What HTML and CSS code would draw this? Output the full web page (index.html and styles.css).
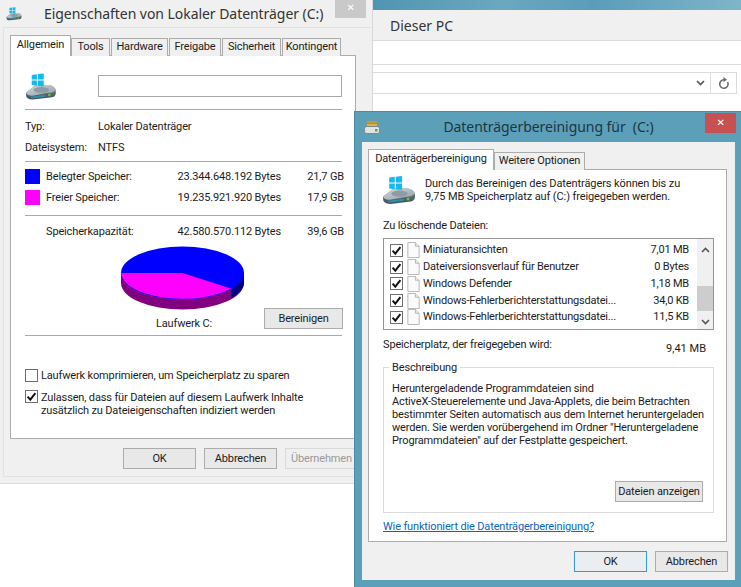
FILE: index.html
```html
<!DOCTYPE html>
<html lang="de">
<head>
<meta charset="utf-8">
<title>Datenträgerbereinigung</title>
<link rel="stylesheet" href="styles.css">
</head>
<body>
<svg class="defs" width="0" height="0" aria-hidden="true">
  <defs>
    <linearGradient id="diskFront" x1="0" y1="0" x2="0" y2="1">
      <stop offset="0" stop-color="#7d8c95"/>
      <stop offset="1" stop-color="#414d55"/>
    </linearGradient>
    <linearGradient id="diskTop" x1="0" y1="0" x2="1" y2="1">
      <stop offset="0" stop-color="#d3dadd"/>
      <stop offset="1" stop-color="#8f9da5"/>
    </linearGradient>
    <symbol id="drive" viewBox="0 0 33 28">
      <path d="M1 20 L11 12 H25 Q31 13 32 18 L32 21 Q31 25 26 25 L8 27 Q1 27 1 22 Z" fill="url(#diskFront)"/>
      <path d="M1 20 L11 12 H25 Q31 13 32 17 Q30 20 24 20 L8 23 Q2 23 1 20 Z" fill="url(#diskTop)"/>
      <ellipse cx="17" cy="17" rx="8" ry="3" fill="#8d9ba3"/>
      <path d="M5 24 L21 22 V24 L7 26 Z" fill="#2d8fae"/>
      <rect x="24" y="21" width="2.5" height="2.5" fill="#5fc24a"/>
      <path d="M7 1.5 L12.4 .7 V6.2 H7 Z M13.4 .6 L19.5 0 V6.2 H13.4 Z M7 7.2 H12.4 V12.8 L7 12 Z M13.4 7.2 H19.5 V13.6 L13.4 12.9 Z" fill="#14b9ef"/>
    </symbol>
    <symbol id="cleaner" viewBox="0 0 16 13">
      <path d="M3 0 H13 L14 2 H2 Z M3 3 H13 V5 H3 Z" fill="#c79a2b"/>
      <path d="M4 3 V5 M6 3 V5 M8 3 V5 M10 3 V5 M12 3 V5" stroke="#f1d98a" stroke-width=".8"/>
      <rect x="0.5" y="5.5" width="15" height="7" rx="2" fill="#dfe3e4" stroke="#7d878c"/>
      <rect x="11" y="8" width="2.5" height="2.5" fill="#4fae3b"/>
    </symbol>
    <symbol id="tick" viewBox="0 0 13 13">
      <path d="M2.6 6.6 L5.3 9.6 L10.4 3.2" fill="none" stroke="#111" stroke-width="2"/>
    </symbol>
    <symbol id="page" viewBox="0 0 13 17">
      <path d="M.5 .5 H8.5 L12.5 4.5 V16.5 H.5 Z" fill="#fbfbfb" stroke="#b4b4b4"/>
      <path d="M8.5 .5 V4.5 H12.5" fill="#eee" stroke="#b4b4b4"/>
    </symbol>
    <symbol id="chev" viewBox="0 0 9 6">
      <path d="M1 1 L4.5 4.5 L8 1" fill="none" stroke="#555" stroke-width="1.6"/>
    </symbol>
  </defs>
</svg>

<main class="desktop">
  <section class="explorer">
    <div class="exp-strip"></div>
    <div class="exp-title">Dieser PC</div>
    <div class="exp-ribbon"></div>
    <div class="exp-address">
      <svg class="exp-chev"><use href="#chev"/></svg>
      <span class="exp-refresh">
        <svg class="reload" viewBox="0 0 12 13"><path d="M9.6 5 A4.2 4.2 0 1 1 6 2.8" fill="none" stroke="#666" stroke-width="1.5"/><path d="M5.5 0 L9 2.8 L5.5 5 Z" fill="#666"/></svg>
      </span>
    </div>
  </section>

  <section class="window props">
    <header class="props-title">
      <svg class="title-icon"><use href="#drive"/></svg>
      <h1 class="title">Eigenschaften von Lokaler Datenträger (C:)</h1>
    </header>
    <span class="close close-idle">✕</span>
    <div class="props-frame">
      <nav class="tabs props-tabs">
        <span class="tab active">Allgemein</span>
        <span class="tab">Tools</span>
        <span class="tab">Hardware</span>
        <span class="tab">Freigabe</span>
        <span class="tab">Sicherheit</span>
        <span class="tab">Kontingent</span>
      </nav>
      <div class="panel props-panel">
        <div class="name-row">
          <svg class="big-drive"><use href="#drive"/></svg>
          <div class="name-input"></div>
        </div>
        <hr class="rule name-rule">
        <div class="prop-row first"><span class="prop-key">Typ:</span><span>Lokaler Datenträger</span></div>
        <div class="prop-row"><span class="prop-key">Dateisystem:</span><span>NTFS</span></div>
        <hr class="rule prop-rule">
        <div class="usage first-usage"><i class="swatch used"></i><span>Belegter Speicher:</span><span class="num">23.344.648.192 Bytes</span><span class="num">21,7 GB</span></div>
        <div class="usage"><i class="swatch free"></i><span>Freier Speicher:</span><span class="num">19.235.921.920 Bytes</span><span class="num">17,9 GB</span></div>
        <hr class="rule usage-rule">
        <div class="usage capacity"><i></i><span>Speicherkapazität:</span><span class="num">42.580.570.112 Bytes</span><span class="num">39,6 GB</span></div>
        <svg class="pie" viewBox="0 0 125 64">
          <path d="M1 27 V37 A61.5 26.5 0 0 0 124 37 V27 Z" fill="#800080"/>
          <path d="M111 42 L124 27 V37 A61.5 26.5 0 0 1 111 52.400 Z" fill="#00007f"/>
          <ellipse cx="62.500" cy="27" rx="61.500" ry="26.500" fill="#0000ff"/>
          <path d="M1 27 H62.500 L111 42.600 A61.500 26.500 0 0 1 1 27 Z" fill="#ff00ff"/>
        </svg>
        <div class="drive-row">
          <span class="drive-label">Laufwerk C:</span>
          <span class="btn clean-btn">Bereinigen</span>
        </div>
        <hr class="rule drive-rule">
        <div class="option option-one"><span class="check"></span><span>Laufwerk komprimieren, um Speicherplatz zu sparen</span></div>
        <div class="option option-two"><span class="check"><svg class="tick"><use href="#tick"/></svg></span><span class="option-text">Zulassen, dass für Dateien auf diesem Laufwerk Inhalte<br>zusätzlich zu Dateieigenschaften indiziert werden</span></div>
      </div>
      <div class="actions props-actions">
        <span class="btn">OK</span>
        <span class="btn">Abbrechen</span>
        <span class="btn disabled">Übernehmen</span>
      </div>
    </div>
  </section>

  <section class="window cleanup">
    <header class="cleanup-title">
      <svg class="cleaner-icon"><use href="#cleaner"/></svg>
      <h1 class="title centered">Datenträgerbereinigung für  (C:)</h1>
    </header>
    <span class="close close-red">✕</span>
    <div class="cleanup-body">
      <nav class="tabs cleanup-tabs">
        <span class="tab active">Datenträgerbereinigung</span>
        <span class="tab">Weitere Optionen</span>
      </nav>
      <div class="panel cleanup-panel">
        <div class="intro">
          <svg class="intro-drive"><use href="#drive"/></svg>
          <p class="intro-text">Durch das Bereinigen des Datenträgers können bis zu<br>9,75 MB Speicherplatz auf  (C:) freigegeben werden.</p>
        </div>
        <div class="list-label">Zu löschende Dateien:</div>
        <div class="file-list">
          <div class="file-rows">
            <div class="file-row"><span class="check"><svg class="tick"><use href="#tick"/></svg></span><svg class="page"><use href="#page"/></svg><span class="file-name">Miniaturansichten</span><span>7,01 MB</span></div>
            <div class="file-row"><span class="check"><svg class="tick"><use href="#tick"/></svg></span><svg class="page"><use href="#page"/></svg><span class="file-name">Dateiversionsverlauf für Benutzer</span><span>0 Bytes</span></div>
            <div class="file-row"><span class="check"><svg class="tick"><use href="#tick"/></svg></span><svg class="page"><use href="#page"/></svg><span class="file-name">Windows Defender</span><span>1,18 MB</span></div>
            <div class="file-row"><span class="check"><svg class="tick"><use href="#tick"/></svg></span><svg class="page"><use href="#page"/></svg><span class="file-name">Windows-Fehlerberichterstattungsdatei...</span><span>34,0 KB</span></div>
            <div class="file-row"><span class="check"><svg class="tick"><use href="#tick"/></svg></span><svg class="page"><use href="#page"/></svg><span class="file-name">Windows-Fehlerberichterstattungsdatei...</span><span>11,5 KB</span></div>
          </div>
          <div class="scrollbar">
            <svg class="scroll-arrow flip"><use href="#chev"/></svg>
            <div class="thumb"></div>
            <svg class="scroll-arrow"><use href="#chev"/></svg>
          </div>
        </div>
        <div class="space-row"><span>Speicherplatz, der freigegeben wird:</span><span class="space-value">9,41 MB</span></div>
        <div class="group">
          <span class="legend">Beschreibung</span>
          <p class="group-text">Heruntergeladende Programmdateien sind<br>ActiveX-Steuerelemente und Java-Applets, die beim Betrachten<br>bestimmter Seiten automatisch aus dem Internet heruntergeladen<br>werden. Sie werden vorübergehend im Ordner "Heruntergeladene<br>Programmdateien" auf der Festplatte gespeichert.</p>
          <span class="btn files-btn">Dateien anzeigen</span>
        </div>
        <a class="help" href="#">Wie funktioniert die Datenträgerbereinigung?</a>
      </div>
      <div class="actions cleanup-actions">
        <span class="btn default">OK</span>
        <span class="btn">Abbrechen</span>
      </div>
    </div>
  </section>
</main>
</body>
</html>
```

FILE: styles.css
```css
* { box-sizing: border-box; }

html, body {
  margin: 0;
  padding: 0;
  background: #fff;
}

body {
  font-family: Roboto, "Noto Sans", "Liberation Sans", sans-serif;
  font-size: 11px;
  line-height: 14px;
  letter-spacing: -0.15px;
  color: #1c1c1c;
}

.defs { position: absolute; }

p, h1 { margin: 0; font-weight: 400; }

.desktop {
  position: relative;
  width: 741px;
  height: 587px;
  overflow: hidden;
  background: #fff;
}

/* Explorer window behind */
.explorer {
  position: absolute;
  left: 373px;
  top: 0;
  width: 368px;
  height: 111px;
  background: #fff;
}

.exp-strip {
  height: 10px;
  background: linear-gradient(100deg, #4f95b1, #6ba8c0 35%, #5a9dba 60%, #7fb5c9 100%);
}

.exp-title {
  height: 31px;
  padding: 6px 0 0 17px;
  background: #f0f0f0;
  border-bottom: 1px solid #dcdcdc;
  font-family: "Noto Sans", sans-serif;
  font-size: 14px;
  letter-spacing: 0;
  line-height: 20px;
  color: #333;
}

.exp-ribbon {
  height: 24px;
  border-bottom: 1px solid #dcdcdc;
}

.exp-address {
  display: flex;
  align-items: center;
  justify-content: flex-end;
  width: 364px;
  height: 22px;
  margin-top: 7px;
  border: 1px solid #dcdcdc;
  border-left: 0;
}

.exp-chev { width: 9px; height: 6px; margin-right: 5px; }

.exp-refresh {
  display: flex;
  align-items: center;
  justify-content: center;
  width: 26px;
  height: 20px;
  border-left: 1px solid #dcdcdc;
}

.reload { width: 12px; height: 13px; }

/* Shared window parts */
.window { position: absolute; }

.title {
  font-family: "Noto Sans", sans-serif;
  font-size: 14px;
  letter-spacing: -0.05px;
  line-height: 20px;
  color: #333;
  white-space: pre;
}

.close {
  position: absolute;
  display: flex;
  align-items: center;
  justify-content: center;
  width: 31px;
  height: 20px;
  color: #fff;
  font-size: 10px;
  font-family: "DejaVu Sans", sans-serif;
}

.close-idle { left: 335px; top: -2px; background: #c9c9c9; }
.close-red { right: 5px; top: 1px; background: #c75050; }

.tabs { display: grid; position: relative; z-index: 1; align-items: end; }

.tab {
  height: 18px;
  margin-right: 1px;
  padding-top: 1px;
  border: 1px solid #acacac;
  border-bottom: 0;
  background: #f0f0f0;
  text-align: center;
  white-space: nowrap;
}

.tab.active {
  height: 21px;
  margin: 0;
  padding-top: 2px;
  background: #fff;
}

.panel {
  background: #fff;
  border: 1px solid #acacac;
}

.btn {
  display: flex;
  align-items: center;
  justify-content: center;
  width: 73px;
  height: 21px;
  border: 1px solid #acacac;
  background: #e8e8e8;
  white-space: nowrap;
}

.btn.disabled { color: #9a9a9a; border-color: #d9d9d9; background: #efefef; }
.btn.default { border-color: #3399dd; background: #eaeef1; }

.actions { display: flex; gap: 8px; margin-top: 9px; }

.rule {
  height: 1px;
  margin: 0;
  border: 0;
  background: #a9a9a9;
}

.check {
  position: relative;
  flex: none;
  width: 13px;
  height: 13px;
  border: 1px solid #6f6f6f;
  background: #fff;
}

.tick {
  position: absolute;
  left: -1px;
  top: -1px;
  width: 13px;
  height: 13px;
}

/* Properties window */
.props {
  left: 0;
  top: 0;
  width: 373px;
  height: 484px;
  background: #f0f0f0;
  border-right: 1px solid #d8d8d8;
  border-bottom: 1px solid #dcdcdc;
}

.props-title {
  display: flex;
  align-items: center;
  height: 27px;
  padding-left: 6px;
}

.title-icon { width: 16px; height: 14px; margin-right: 22px; }

.props-frame {
  width: 368px;
  height: 450px;
  margin-left: 3px;
  padding: 7px 0 0 6px;
  border: 1px solid #e2e2e2;
  border-width: 1px 0 1px 1px;
}

.props-tabs {
  grid-template-columns: 61px 40px 58px 53px 60px 60px;
  margin-bottom: -1px;
}

.props-panel {
  width: 346px;
  height: 384px;
  padding: 0 13px 0 14px;
}

.name-row { display: flex; height: 22px; margin-top: 19px; }

.big-drive { width: 32px; height: 28px; margin-top: -2px; }

.name-input {
  width: 246px;
  height: 22px;
  margin-left: 41px;
  border: 1px solid #a9a9a9;
  background: #fff;
}

.name-rule { margin-top: 12px; }

.prop-row {
  display: flex;
  height: 21px;
  align-items: center;
}

.prop-row.first { margin-top: 6px; }
.prop-key { width: 73px; }
.prop-rule { margin-top: 3px; }

.usage {
  display: grid;
  grid-template-columns: 21px minmax(0, 1fr) 150px 63px;
  align-items: center;
  height: 15px;
  margin-top: 6px;
  margin-right: -2px;
  padding-bottom: 1px;
  white-space: nowrap;
}

.usage.first-usage { margin-top: 7px; }
.usage.capacity { margin-top: 8px; padding-bottom: 0; }
.num { text-align: right; white-space: nowrap; }

.swatch { display: block; width: 15px; height: 15px; }
.swatch.used { background: #0000ff; }
.swatch.free { background: #ff00ff; }

.usage-rule { margin-top: 10px; }

.pie {
  display: block;
  width: 125px;
  height: 64px;
  margin: 7px 0 0 95px;
}

.drive-row {
  display: flex;
  justify-content: space-between;
  margin-top: -2px;
}

.drive-label { margin: 8px 0 0 131px; line-height: 16px; }
.clean-btn { width: 79px; margin-right: -1px; }

.drive-rule { margin-top: 3px; }

.option { display: flex; gap: 3px; line-height: 13px; }
.option-one { margin-top: 33px; }
.option-two { margin-top: 8px; }
.option-text { padding-top: 1px; }

.props-actions { margin-left: 113px; }

/* Cleanup window */
.cleanup {
  left: 354px;
  top: 111px;
  width: 387px;
  height: 476px;
  background: #5b9fb9;
  border-top: 1px solid #4c8aa3;
  border-left: 1px solid #4c8aa3;
}

.cleanup-title {
  position: relative;
  display: flex;
  align-items: center;
  height: 30px;
  padding-left: 9px;
}

.cleaner-icon { width: 16px; height: 13px; }

.centered {
  flex: 1;
  margin-right: 24px;
  text-align: center;
  color: #1d3644;
}

.cleanup-body {
  width: 373px;
  height: 438px;
  margin-left: 7px;
  padding: 7px 0 0 6px;
  background: #f0f0f0;
}

.cleanup-tabs {
  grid-template-columns: 126px 92px;
  margin-bottom: -1px;
}

.cleanup-panel {
  width: 359px;
  height: 373px;
  padding: 0 12px 0 14px;
}

.intro { display: flex; margin-top: 6px; height: 28px; }
.intro-drive { flex: none; width: 34px; height: 29px; margin-left: -1px; }
.intro-text { margin-left: 9px; line-height: 13px; padding-top: 1px; white-space: nowrap; letter-spacing: -0.1px; }

.list-label { margin-top: 15px; }

.file-list {
  display: flex;
  width: 331px;
  height: 92px;
  margin-top: 5px;
  border: 1px solid #949494;
}

.file-rows { flex: 1; padding: 3px 8px 0 6px; letter-spacing: -0.2px; }

.file-row {
  display: flex;
  align-items: center;
  height: 16.75px;
}

.page { width: 13px; height: 16px; margin: 0 3px 0 4px; }
.file-name { flex: 1; white-space: nowrap; }

.scrollbar {
  display: flex;
  flex-direction: column;
  align-items: center;
  width: 16px;
  background: #f0f0f0;
}

.scroll-arrow { width: 9px; height: 6px; margin-top: 8px; }
.scroll-arrow.flip { transform: scaleY(-1); }

.thumb {
  width: 16px;
  height: 25px;
  margin-top: 33px;
  background: #cdcdcd;
}

.space-row {
  display: flex;
  justify-content: space-between;
  width: 331px;
  margin-top: 8px;
  padding-right: 8px;
}

.space-value { margin-top: 4px; letter-spacing: 0; }

.group {
  position: relative;
  display: flex;
  flex-direction: column;
  width: 331px;
  height: 146px;
  margin-top: 11px;
  padding: 14px 10px 10px 8px;
  border: 1px solid #dcdcdc;
}

.legend {
  position: absolute;
  left: 5px;
  top: -7px;
  padding: 0 3px;
  background: #fff;
}

.group-text { flex: 1; line-height: 13px; white-space: nowrap; }
.files-btn { align-self: flex-end; width: 88px; }

.help {
  display: block;
  margin-top: 7px;
  color: #0a66c2;
}

.cleanup-actions {
  justify-content: flex-end;
  width: 360px;
}
```
